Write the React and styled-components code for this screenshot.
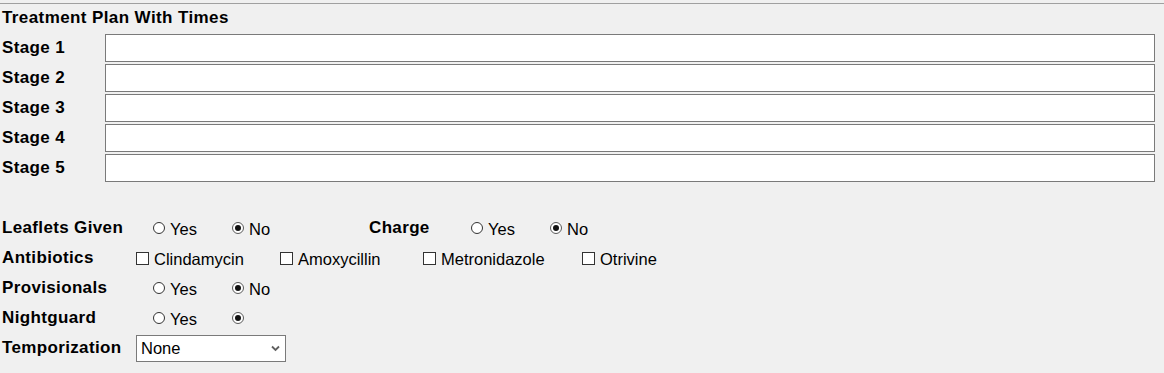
import React from "react";
import styled, { createGlobalStyle } from "styled-components";

const Global = createGlobalStyle`
  html, body { margin: 0; padding: 0; background: #f0f0f0; }
  body { font-family: "Liberation Sans", Arial, sans-serif; color: #000; }
`;

const Page = styled.div`
  width: 1164px;
  height: 373px;
  box-sizing: border-box;
  padding-top: 3px;
  background: #f0f0f0;
  overflow: hidden;
`;

const TopRule = styled.div`
  height: 1px;
  background: #a0a0a0;
`;

const Body = styled.div`
  padding: 0 9px 0 2px;
`;

const Title = styled.div`
  height: 27px;
  display: flex;
  align-items: center;
  font-weight: bold;
  font-size: 17px;
  letter-spacing: 0.4px;
  margin-bottom: 2px;
`;

const StageList = styled.div`
  display: flex;
  flex-direction: column;
  margin-bottom: 30px;
`;

const StageRow = styled.div`
  height: 30px;
  display: flex;
  align-items: center;
`;

const BoldLabel = styled.div`
  width: ${(p) => p.$w}px;
  flex: none;
  font-weight: bold;
  font-size: 17px;
  letter-spacing: 0.35px;
  white-space: nowrap;
  line-height: 20px;
`;

const TextInput = styled.input`
  flex: 1;
  height: 28px;
  box-sizing: border-box;
  border: 1px solid #7a7a7a;
  background: #fff;
  margin: 0;
  padding: 0 4px;
  outline: none;
`;

const OptionsSection = styled.div`
  display: flex;
  flex-direction: column;
`;

const OptionRow = styled.div`
  height: 30px;
  display: flex;
  align-items: center;
`;

const Choice = styled.label`
  width: ${(p) => p.$w}px;
  flex: none;
  display: flex;
  align-items: center;
  gap: 5px;
  font-size: 16.5px;
  white-space: nowrap;
  line-height: 20px;
`;

const ChoiceText = styled.span`
  padding-top: 1px;
`;

const RadioDot = styled.span`
  width: 12px;
  height: 12px;
  box-sizing: border-box;
  border-radius: 50%;
  border: 1px solid ${(p) => (p.$on ? "#5a5a5a" : "#333")};
  background: #fff;
  flex: none;
  display: flex;
  align-items: center;
  justify-content: center;
  &::after {
    content: "";
    width: 6px;
    height: 6px;
    border-radius: 50%;
    background: #111;
    display: ${(p) => (p.$on ? "block" : "none")};
  }
`;

const CheckBox = styled.span`
  width: 13px;
  height: 13px;
  box-sizing: border-box;
  border: 1px solid #333;
  background: #fff;
  flex: none;
`;

const SelectBox = styled.div`
  width: 150px;
  height: 27px;
  box-sizing: border-box;
  border: 1px solid #7a7a7a;
  background: #fff;
  display: flex;
  align-items: center;
  justify-content: space-between;
  padding: 1px 5px 0 4px;
  font-size: 16.5px;
`;

const Chevron = () => (
  <svg width="9" height="7" viewBox="0 0 9 7">
    <path d="M1 1.5 L4.5 5 L8 1.5" stroke="#606060" strokeWidth="1.8" fill="none" />
  </svg>
);

const Radio = ({ on, label, w }) => (
  <Choice $w={w}>
    <RadioDot $on={on} />
    {label && <ChoiceText>{label}</ChoiceText>}
  </Choice>
);

const Check = ({ label, w }) => (
  <Choice $w={w}>
    <CheckBox />
    <ChoiceText>{label}</ChoiceText>
  </Choice>
);

export default function App() {
  const stages = [1, 2, 3, 4, 5];
  return (
    <>
      <Global />
      <Page>
        <TopRule />
        <Body>
          <Title>Treatment Plan With Times</Title>
          <StageList>
            {stages.map((n) => (
              <StageRow key={n}>
                <BoldLabel $w={103}>Stage {n}</BoldLabel>
                <TextInput type="text" />
              </StageRow>
            ))}
          </StageList>
          <OptionsSection>
            <OptionRow>
              <BoldLabel $w={151}>Leaflets Given</BoldLabel>
              <Radio w={79} label="Yes" />
              <Radio w={137} label="No" on />
              <BoldLabel $w={102}>Charge</BoldLabel>
              <Radio w={79} label="Yes" />
              <Radio w={60} label="No" on />
            </OptionRow>
            <OptionRow>
              <BoldLabel $w={134}>Antibiotics</BoldLabel>
              <Check w={144} label="Clindamycin" />
              <Check w={143} label="Amoxycillin" />
              <Check w={159} label="Metronidazole" />
              <Check w={90} label="Otrivine" />
            </OptionRow>
            <OptionRow>
              <BoldLabel $w={151}>Provisionals</BoldLabel>
              <Radio w={79} label="Yes" />
              <Radio w={60} label="No" on />
            </OptionRow>
            <OptionRow>
              <BoldLabel $w={151}>Nightguard</BoldLabel>
              <Radio w={79} label="Yes" />
              <Radio w={60} on />
            </OptionRow>
            <OptionRow>
              <BoldLabel $w={134}>Temporization</BoldLabel>
              <SelectBox>
                <span>None</span>
                <Chevron />
              </SelectBox>
            </OptionRow>
          </OptionsSection>
        </Body>
      </Page>
    </>
  );
}
